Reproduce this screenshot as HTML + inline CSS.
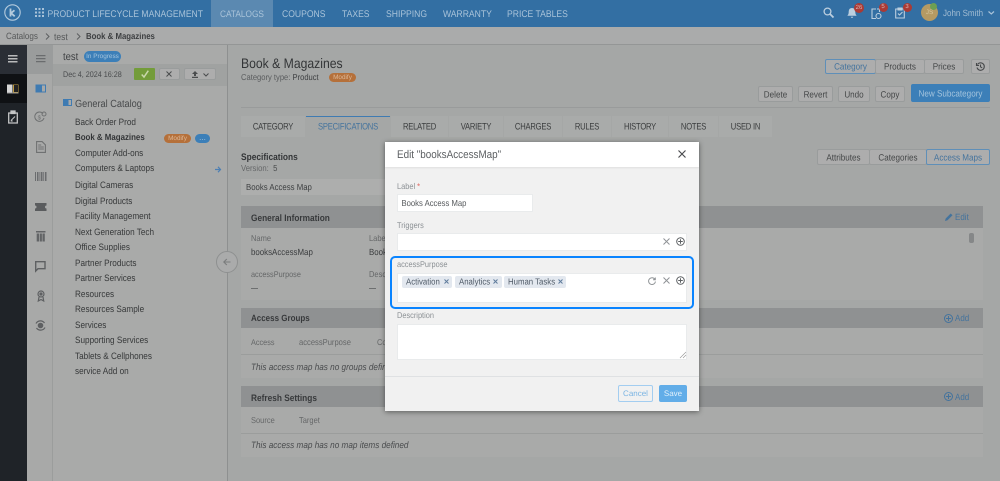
<!DOCTYPE html>
<html><head><meta charset="utf-8"><title>Catalogs</title>
<style>
html,body{margin:0;padding:0;width:1000px;height:481px;overflow:hidden;background:#a5a7a6}
body{position:relative;font-family:"Liberation Sans",sans-serif;font-size:8.2px;color:#3d3f41;text-rendering:geometricPrecision;filter:blur(.3px)}
.a{position:absolute}
.t{position:absolute;white-space:nowrap;line-height:12px;transform:translateY(-5.5px) scaleY(1.13)}
.b{position:absolute;box-sizing:border-box;text-align:center;white-space:nowrap;background:#adadad;border:1px solid #999c9c;border-radius:2px;color:#444647;font-size:8.1px}
.b span,.tag span{display:inline-block;transform:scaleY(1.13)}
.tab span{display:inline-block;transform:scaleY(1.25)}
.nav{color:#a9c3d9;font-size:8.6px;top:12.5px}
.tab{position:absolute;top:116px;height:21px;line-height:22px;text-align:center;background:#a9abaa;color:#3a3c3d;font-size:7.6px;letter-spacing:-.2px}
.it{left:75px;font-size:8.2px;color:#37393a}
.ph{position:absolute;left:241px;width:742px;background:#8f9192}
.pb{position:absolute;left:241px;width:742px;background:#a9aaa9}
.ptt{left:251px;font-weight:bold;font-size:8.3px;color:#37393b}
.mut{color:#656768;font-size:7.5px}
.lab{color:#8c9195;font-size:7.4px}
.inp{position:absolute;background:#fff;border:1px solid #e9ebec;box-sizing:border-box}
.tag{position:absolute;top:276px;height:12px;line-height:12px;background:#e3e8ef;border-radius:2px;color:#505b68;font-size:7.8px;padding-left:4px;box-sizing:border-box;white-space:nowrap}
.bd{position:absolute;width:9px;height:9px;border-radius:50%;background:#aa3a35;color:#d9b5b3;font-size:6px;line-height:9px;text-align:center}
svg{position:absolute;overflow:visible}
</style></head><body>

<!-- top bar -->
<div class="a" style="left:0;top:0;width:1000px;height:27px;background:#336fa3"></div>
<div class="a" style="left:211px;top:0;width:62px;height:27px;background:#5b89b1"></div>
<svg style="left:4px;top:4px" width="17" height="17" fill="none" stroke="#b5cbdd"><circle cx="8.5" cy="8.5" r="7.7" stroke-width="1.1"/><path d="M6.5 4.5v8M10.500 6.300L7 9l3.700 3.300" stroke-width="1.8"/></svg>
<svg style="left:35px;top:8px" width="9" height="9" fill="#a9c3d9"><path d="M0 0h2v2H0zM3.500 0h2v2h-2zM7 0h2v2H7zM0 3.500h2v2H0zM3.500 3.500h2v2h-2zM7 3.500h2v2H7zM0 7h2v2H0zM3.500 7h2v2h-2zM7 7h2v2H7z"/></svg>
<div class="t nav" style="left:47.5px">PRODUCT LIFECYCLE MANAGEMENT</div>
<div class="t nav" style="left:220px;font-size:8.3px">CATALOGS</div>
<div class="t nav" style="left:282px">COUPONS</div>
<div class="t nav" style="left:342px">TAXES</div>
<div class="t nav" style="left:386px">SHIPPING</div>
<div class="t nav" style="left:443px">WARRANTY</div>
<div class="t nav" style="left:507px">PRICE TABLES</div>
<svg style="left:823px;top:7px" width="11" height="11" fill="none" stroke="#bccfdf" stroke-width="1.3"><circle cx="4.500" cy="4.500" r="3.400"/><path d="M7 7l3.500 3.500" stroke-width="1.8"/></svg>
<svg style="left:847px;top:8px" width="10" height="11" fill="#bccfdf"><path d="M5 0c2.400 0 3.300 1.800 3.300 4 0 2 .7 3 1.400 3.800H.3C1 7 1.700 6 1.700 4 1.700 1.800 2.600 0 5 0zM3.800 8.700h2.400c0 1.500-2.400 1.500-2.400 0z"/></svg>
<div class="bd" style="left:854px;top:3px;width:10px;height:10px;line-height:10px">26</div>
<svg style="left:871px;top:8px" width="11" height="12" fill="none" stroke="#bccfdf" stroke-width="1.1"><path d="M5 1H1v9.500h4M6 1h2.500v3"/><circle cx="7.500" cy="8" r="2.500"/></svg>
<div class="bd" style="left:878.5px;top:3px">5</div>
<svg style="left:895px;top:8px" width="10" height="11" fill="none" stroke="#bccfdf" stroke-width="1.1"><path d="M3 1H.7v9h8.600V1H7M3 5.500l1.500 1.500 3-3"/><path d="M3 0h4v2H3z" fill="#bccfdf"/></svg>
<div class="bd" style="left:902.5px;top:3px">3</div>
<div class="a" style="left:921px;top:4px;width:17px;height:17px;border-radius:50%;background:#b59a63;color:#d6c69d;font-size:6.5px;line-height:17px;text-align:center">JS</div>
<div class="a" style="left:930px;top:3px;width:7px;height:7px;border-radius:50%;background:#6d9f53"></div>
<div class="t" style="left:943px;top:12.5px;color:#a2bcd2;font-size:8px">John Smith</div>
<svg style="left:988px;top:11px" width="7" height="5" fill="none" stroke="#a9c3d9" stroke-width="1.2"><path d="M.5.500L3.300 3 6 .5"/></svg>

<!-- breadcrumb -->
<div class="a" style="left:0;top:27px;width:1000px;height:18px;background:#aaabab;border-bottom:1px solid #949696;box-sizing:border-box"></div>
<div class="t" style="left:6px;top:36px;color:#565859;font-size:8.1px">Catalogs</div>
<svg style="left:45px;top:33px" width="5" height="7" fill="none" stroke="#5d5f61"><path d="M1 .5L4 3.500 1 6.500"/></svg>
<div class="t" style="left:54px;top:36px;color:#565859;font-size:8.5px">test</div>
<svg style="left:76px;top:33px" width="5" height="7" fill="none" stroke="#5d5f61"><path d="M1 .5L4 3.500 1 6.500"/></svg>
<div class="t" style="left:86px;top:36px;font-weight:bold;color:#3d3f41;font-size:7.8px">Book &amp; Magazines</div>

<!-- dark sidebar -->
<div class="a" style="left:0;top:45px;width:27px;height:436px;background:#1f2328"></div>
<div class="a" style="left:0;top:45px;width:27px;height:29px;background:#2a2e35"></div>
<div class="a" style="left:0;top:74px;width:27px;height:29px;background:#0f1114"></div>
<svg style="left:8px;top:55px" width="10" height="8" fill="#b9babb"><path d="M0 0h9.500v1.500H0zM0 3h9.500v1.500H0zM0 6h9.500v1.500H0z"/></svg>
<svg style="left:7px;top:84px" width="12" height="10"><path d="M0 .5h5.500v8H0z" fill="#d6d6d6"/><path d="M6 .5h5.500v8H6z" fill="#c09a3f"/><path d="M7 1h4v7H7z" fill="#222"/><path d="M0 8.500h11.500V9.500H0z" fill="#999"/></svg>
<svg style="left:8px;top:111px" width="10" height="13" fill="none" stroke="#c4c5c6" stroke-width="1.3"><path d="M.7 2h8.600v10H.7z"/><path d="M3 0h4v2.500H3z" fill="#c4c5c6"/><path d="M3 9.500L7 5.500M2.700 10h2" stroke-width="1"/></svg>

<!-- secondary sidebar -->
<div class="a" style="left:27px;top:45px;width:26px;height:436px;background:#a8a9a8;border-right:1px solid #9b9d9c;box-sizing:border-box"></div>
<div class="a" style="left:27px;top:45px;width:26px;height:29px;background:#9a9c9c"></div>
<svg style="left:36px;top:55px" width="10" height="8" fill="#6a6c6e"><path d="M0 0h9.500v1.300H0zM0 3h9.500v1.300H0zM0 6h9.500v1.300H0z"/></svg>
<svg style="left:35px;top:84px" width="12" height="10"><path d="M.5.500h5.500v8H.5z" fill="#3f7bb2"/><path d="M6.500 1h4v7h-4z" fill="none" stroke="#3f7bb2"/></svg>
<svg style="left:35px;top:111px" width="12" height="12" fill="none" stroke="#6f7172"><path d="M8 2.500A4.700 4.700 0 1 0 9 7"/><circle cx="9" cy="3" r="2"/><text x="2.600" y="8.500" font-size="6" fill="#6f7172" stroke="none" font-family="Liberation Sans">$</text></svg>
<svg style="left:36px;top:141px" width="10" height="12" fill="none" stroke="#6f7172" stroke-width="1.1"><path d="M.6.600h5.500l3.300 3.300v7.500H.6z"/><path d="M2.200 6h5.600M2.200 8h5.600M2.200 4h3"/></svg>
<svg style="left:35px;top:172px" width="12" height="10" fill="#6a6c6e"><path d="M0 0h1v9H0zM2 0h1.500v9H2zM4.500 0h.8v9h-.8zM6 0h1.500v9H6zM8.300 0h.8v9h-.8zM10 0h1.500v9H10z"/></svg>
<svg style="left:35px;top:203px" width="12" height="8"><path d="M0 0h11.500v2.500a1.500 1.500 0 0 0 0 3V8H0V5.500a1.500 1.500 0 0 0 0-3z" fill="#5a5c5e"/></svg>
<svg style="left:36px;top:231px" width="10" height="11" fill="#626466"><path d="M0 0h9.500v1.500H0zM.7 2.500h2.300V10.500H.7zM3.700 2.500h2.200V10.500H3.700zM6.500 2.500h2.300V10.500H6.500z"/></svg>
<svg style="left:35px;top:261px" width="11" height="11" fill="none" stroke="#5e6062" stroke-width="1.4"><path d="M.7.700h9.300v7H3L.7 10z"/></svg>
<svg style="left:37px;top:290px" width="8" height="12" fill="none" stroke="#5e6062" stroke-width="1.2"><circle cx="4" cy="4" r="3"/><circle cx="4" cy="4" r="1" fill="#5e6062"/><path d="M2 7l-.7 4 2.700-1.500L6.700 11 6 7"/></svg>
<svg style="left:35px;top:320px" width="11" height="11" fill="none" stroke="#5e6062" stroke-width="1.2"><path d="M1 3.500A5 5 0 0 1 9.500 3M10 7.500A5 5 0 0 1 1.500 8"/><circle cx="5.500" cy="5.500" r="2.200" fill="#5e6062"/></svg>

<!-- tree panel -->
<div class="a" style="left:53px;top:45px;width:174px;height:436px;background:#a9aaa9"></div>
<div class="a" style="left:53px;top:64px;width:174px;height:22px;background:#a0a2a1"></div>
<div class="a" style="left:227px;top:45px;width:1px;height:436px;background:#8e9090"></div>
<div class="t" style="left:63px;top:57px;font-size:9.5px;color:#404244">test</div>
<div class="a" style="left:84px;top:51px;width:37px;height:11px;line-height:11px;border-radius:6px;background:#3c7fb8;color:#a4c4dd;font-size:6.4px;text-align:center">In Progress</div>
<div class="t" style="left:63px;top:74px;font-size:7.2px;color:#4a4c4e">Dec 4, 2024 16:28</div>
<div class="a" style="left:134px;top:68px;width:21px;height:12px;background:#739c3a;border-radius:1px"></div>
<svg style="left:141px;top:70px" width="8" height="8" fill="none" stroke="#c9d7ab" stroke-width="1.5"><path d="M.7 4.500L3 7 7.300.7"/></svg>
<div class="b" style="left:159px;top:68px;width:21px;height:12px"></div>
<svg style="left:166px;top:71px" width="6" height="6" fill="none" stroke="#4a4c4d"><path d="M.5.500l5 5M5.500.5l-5 5"/></svg>
<div class="b" style="left:184px;top:68px;width:32px;height:12px"></div>
<svg style="left:192px;top:71px" width="6" height="7" fill="#4a4c4d"><path d="M3 0l3 3H4v2H2V3H0zM0 5.800h6V7H0z"/></svg>
<svg style="left:203px;top:73px" width="6" height="4" fill="none" stroke="#4a4c4d"><path d="M.5.500L3 3 5.500.5"/></svg>
<svg style="left:63px;top:99px" width="9" height="7"><path d="M0 0h4.500v7H0z" fill="#3f7bb2"/><path d="M5 .5h3.500v6H5z" fill="none" stroke="#3f7bb2"/></svg>
<div class="t" style="left:75px;top:103px;font-size:9.2px;color:#484a4c">General Catalog</div>
<div class="t it" style="top:122px">Back Order Prod</div>
<div class="t it" style="top:137px;font-weight:bold;font-size:7.9px;color:#333537">Book &amp; Magazines</div>
<div class="a" style="left:164px;top:134px;width:27px;height:9px;line-height:9px;border-radius:5px;background:#b5703a;color:#dcb898;font-size:6.4px;text-align:center">Modify</div>
<div class="a" style="left:195px;top:134px;width:15px;height:9px;line-height:7px;border-radius:5px;background:#3c7fb8;color:#a4c4dd;font-size:8px;text-align:center">...</div>
<div class="t it" style="top:153px">Computer Add-ons</div>
<div class="t it" style="top:168px">Computers &amp; Laptops</div>
<svg style="left:215px;top:166px" width="6" height="7" fill="none" stroke="#4d7fb3" stroke-width="1.2"><path d="M0 3.500h5M3 .8l2.500 2.700L3 6.200"/></svg>
<div class="t it" style="top:185px">Digital Cameras</div>
<div class="t it" style="top:201px">Digital Products</div>
<div class="t it" style="top:216px">Facility Management</div>
<div class="t it" style="top:232px">Next Generation Tech</div>
<div class="t it" style="top:247px">Office Supplies</div>
<div class="t it" style="top:263px">Partner Products</div>
<div class="t it" style="top:278px">Partner Services</div>
<div class="t it" style="top:294px">Resources</div>
<div class="t it" style="top:309px">Resources Sample</div>
<div class="t it" style="top:325px">Services</div>
<div class="t it" style="top:340px">Supporting Services</div>
<div class="t it" style="top:356px">Tablets &amp; Cellphones</div>
<div class="t it" style="top:371px">service Add on</div>
<div class="a" style="left:216px;top:251px;width:22px;height:22px;box-sizing:border-box;border-radius:50%;background:#aaabab;border:1px solid #8e9090"></div>
<svg style="left:223px;top:258px" width="8" height="8" fill="none" stroke="#7a7c7d" stroke-width="1.1"><path d="M7.500 4H.8M3.800 1L.8 4l3 3"/></svg>

<!-- main header -->
<div class="t" style="left:241px;top:63px;font-size:12.2px;color:#333537">Book &amp; Magazines</div>
<div class="t" style="left:241px;top:77px;font-size:7.6px;color:#5a5c5e">Category type: <span style="color:#3d3f41">Product</span></div>
<div class="a" style="left:329px;top:73px;width:27px;height:9px;line-height:9px;border-radius:5px;background:#b5703a;color:#dcb898;font-size:6.4px;text-align:center">Modify</div>
<div class="a" style="left:241px;top:107px;width:749px;height:1px;background:#999b9b"></div>

<div class="b" style="left:825px;top:59px;width:51px;height:15px;line-height:14px;border-color:#5f8fb8;color:#44739d"><span>Category</span></div>
<div class="b" style="left:875px;top:59px;width:50px;height:15px;line-height:14px"><span>Products</span></div>
<div class="b" style="left:924px;top:59px;width:40px;height:15px;line-height:14px"><span>Prices</span></div>
<div class="b" style="left:971px;top:59px;width:19px;height:15px"></div>
<svg style="left:976px;top:62px" width="9" height="9" fill="none" stroke="#46484a" stroke-width="1.1"><path d="M1.500 2.500A3.700 3.700 0 1 1 1 5.500M.5 1v2.500h2.500M4.500 2.500v2.300l1.700 1"/></svg>
<div class="b" style="left:758px;top:86px;width:35px;height:16px;line-height:15px"><span>Delete</span></div>
<div class="b" style="left:798px;top:86px;width:35px;height:16px;line-height:15px"><span>Revert</span></div>
<div class="b" style="left:838px;top:86px;width:32px;height:16px;line-height:15px"><span>Undo</span></div>
<div class="b" style="left:875px;top:86px;width:30px;height:16px;line-height:15px"><span>Copy</span></div>
<div class="b" style="left:911px;top:84px;width:79px;height:18px;line-height:17px;background:#3c7fb8;border-color:#3c7fb8;color:#a4c4dd"><span>New Subcategory</span></div>

<!-- tabs -->
<div class="tab" style="left:241px;width:64px"><span>CATEGORY</span></div>
<div class="tab" style="left:306px;width:84px;border-top:1px solid #3f7bb2;box-sizing:border-box;color:#44739d;background:#a5a7a6;line-height:20px"><span>SPECIFICATIONS</span></div>
<div class="tab" style="left:391px;width:57px"><span>RELATED</span></div>
<div class="tab" style="left:449px;width:54px"><span>VARIETY</span></div>
<div class="tab" style="left:504px;width:58px"><span>CHARGES</span></div>
<div class="tab" style="left:563px;width:48px"><span>RULES</span></div>
<div class="tab" style="left:612px;width:56px"><span>HISTORY</span></div>
<div class="tab" style="left:669px;width:49px"><span>NOTES</span></div>
<div class="tab" style="left:719px;width:53px"><span>USED IN</span></div>

<!-- specifications -->
<div class="t" style="left:241px;top:156px;font-weight:bold;font-size:8.4px;color:#333537">Specifications</div>
<div class="t mut" style="left:241px;top:168px;font-size:7.7px">Version: &nbsp;<span style="color:#4a4c4d">5</span></div>
<div class="a" style="left:241px;top:179px;width:150px;height:16px;background:#adaead"></div>
<div class="t" style="left:246px;top:187px;font-size:7.8px;color:#3e4042">Books Access Map</div>
<div class="b" style="left:817px;top:149px;width:53px;height:16px;line-height:15px"><span>Attributes</span></div>
<div class="b" style="left:869px;top:149px;width:58px;height:16px;line-height:15px"><span>Categories</span></div>
<div class="b" style="left:926px;top:149px;width:64px;height:16px;line-height:15px;border-color:#5f8fb8;color:#44739d"><span>Access Maps</span></div>

<div class="ph" style="top:206px;height:22px"></div>
<div class="pb" style="top:228px;height:72px"></div>
<div class="t ptt" style="top:217px">General Information</div>
<svg style="left:945px;top:213px" width="8" height="8" fill="#44739d"><path d="M0 8l.7-2.500L5.700.5l1.800 1.800-5 5z"/></svg>
<div class="t" style="left:955px;top:217px;color:#44739d;font-size:8px">Edit</div>
<div class="a" style="left:969px;top:233px;width:5px;height:10px;border-radius:2px;background:#858788"></div>
<div class="t mut" style="left:251px;top:238px">Name</div>
<div class="t" style="left:251px;top:252px;font-size:7.9px;color:#3a3c3e">booksAccessMap</div>
<div class="t mut" style="left:369px;top:238px">Label</div>
<div class="t" style="left:369px;top:252px;font-size:7.9px;color:#3a3c3e">Books</div>
<div class="t mut" style="left:251px;top:274px;font-size:7.3px">accessPurpose</div>
<div class="t mut" style="left:369px;top:274px">Description</div>
<div class="a" style="left:251px;top:288px;width:7px;height:1px;background:#6d6f70"></div>
<div class="a" style="left:369px;top:288px;width:7px;height:1px;background:#6d6f70"></div>

<div class="ph" style="top:308px;height:20px"></div>
<div class="pb" style="top:328px;height:50px"></div>
<div class="a" style="left:241px;top:354px;width:742px;height:1px;background:#9b9d9c"></div>
<div class="t ptt" style="top:318px;font-size:8px">Access Groups</div>
<svg style="left:944px;top:314px" width="9" height="9" fill="none" stroke="#44739d"><circle cx="4.500" cy="4.500" r="4"/><path d="M2 4.500h5M4.500 2v5"/></svg>
<div class="t" style="left:955px;top:318px;color:#44739d;font-size:8px">Add</div>
<div class="t mut" style="left:251px;top:342px;font-size:7.3px">Access</div>
<div class="t mut" style="left:299px;top:342px;font-size:7.6px">accessPurpose</div>
<div class="t mut" style="left:377px;top:342px">Co</div>
<div class="t" style="left:251px;top:367px;font-style:italic;color:#4a4c4e;font-size:8.2px">This access map has no groups defined</div>

<div class="ph" style="top:386px;height:21px"></div>
<div class="pb" style="top:407px;height:50px"></div>
<div class="a" style="left:241px;top:433px;width:742px;height:1px;background:#9b9d9c"></div>
<div class="t ptt" style="top:397px">Refresh Settings</div>
<svg style="left:944px;top:392px" width="9" height="9" fill="none" stroke="#44739d"><circle cx="4.500" cy="4.500" r="4"/><path d="M2 4.500h5M4.500 2v5"/></svg>
<div class="t" style="left:955px;top:397px;color:#44739d;font-size:8px">Add</div>
<div class="t mut" style="left:251px;top:420px">Source</div>
<div class="t mut" style="left:299px;top:420px">Target</div>
<div class="t" style="left:251px;top:445px;font-style:italic;color:#4a4c4e;font-size:8.2px">This access map has no map items defined</div>

<!-- modal -->
<div class="a" style="left:385px;top:142px;width:314px;height:269px;background:#f1f1f1;box-shadow:0 1px 5px rgba(0,0,0,.45)"></div>
<div class="a" style="left:385px;top:142px;width:314px;height:25px;background:#fff;box-shadow:0 1px 2px rgba(0,0,0,.08)"></div>
<div class="t" style="left:397px;top:155px;font-size:9.9px;color:#5d6063">Edit "booksAccessMap"</div>
<svg style="left:678px;top:150px" width="8" height="8" fill="none" stroke="#4b4d50" stroke-width="1.2"><path d="M.5.500l7 7M7.500.5l-7 7"/></svg>

<div class="t lab" style="left:397px;top:186px">Label <span style="color:#e0645c">*</span></div>
<div class="inp" style="left:397px;top:194px;width:136px;height:18px"></div>
<div class="t" style="left:401.5px;top:203px;font-size:7.7px;color:#56595c">Books Access Map</div>

<div class="t lab" style="left:397px;top:225px">Triggers</div>
<div class="inp" style="left:397px;top:233px;width:290px;height:18px"></div>
<svg style="left:663px;top:238px" width="7" height="7" fill="none" stroke="#8f9396"><path d="M.5.500l6 6M6.500.5l-6 6"/></svg>
<svg style="left:676px;top:237px" width="9" height="9" fill="none" stroke="#5d6063"><circle cx="4.500" cy="4.500" r="3.800"/><path d="M2.200 4.500h4.600M4.500 2.200v4.600"/></svg>

<div class="a" style="left:389.5px;top:256px;width:304px;height:53px;box-sizing:border-box;border:2.5px solid #0a84ff;border-radius:5px"></div>
<div class="t lab" style="left:397px;top:264px">accessPurpose</div>
<div class="inp" style="left:397px;top:273px;width:290px;height:30px"></div>
<div class="tag" style="left:402px;width:50px"><span>Activation</span><svg style="left:42px;top:2.500px" width="5" height="5" fill="none" stroke="#5f7b9c"><path d="M.5.500l4 4M4.500.5l-4 4"/></svg></div>
<div class="tag" style="left:455px;width:47px"><span>Analytics</span><svg style="left:38px;top:2.500px" width="5" height="5" fill="none" stroke="#5f7b9c"><path d="M.5.500l4 4M4.500.5l-4 4"/></svg></div>
<div class="tag" style="left:504px;width:62px"><span>Human Tasks</span><svg style="left:54px;top:2.500px" width="5" height="5" fill="none" stroke="#5f7b9c"><path d="M.5.500l4 4M4.500.5l-4 4"/></svg></div>
<svg style="left:648px;top:277px" width="8" height="8" fill="none" stroke="#8f9396"><path d="M7 2.500A3.400 3.400 0 1 0 7.400 4.500M7.300.5v2.300H5"/></svg>
<svg style="left:663px;top:277px" width="7" height="7" fill="none" stroke="#8f9396"><path d="M.5.500l6 6M6.500.5l-6 6"/></svg>
<svg style="left:676px;top:276px" width="9" height="9" fill="none" stroke="#5d6063"><circle cx="4.500" cy="4.500" r="3.800"/><path d="M2.200 4.500h4.600M4.500 2.200v4.600"/></svg>

<div class="t lab" style="left:397px;top:315px">Description</div>
<div class="inp" style="left:397px;top:324px;width:290px;height:36px"></div>
<svg style="left:680px;top:352px" width="6" height="6" fill="none" stroke="#9a9a9a" stroke-width=".7"><path d="M0 6l6-6M3 6l3-3"/></svg>
<div class="a" style="left:385px;top:376px;width:314px;height:1px;background:#dfe1e3"></div>
<div class="a" style="left:618px;top:385px;width:35px;height:17px;line-height:16px;box-sizing:border-box;border:1px solid #a3cdf0;border-radius:2px;color:#7ab4e3;font-size:8px;text-align:center">Cancel</div>
<div class="a" style="left:659px;top:385px;width:28px;height:17px;line-height:17px;border-radius:2px;background:#62ade8;color:#e1f0fb;font-size:8px;text-align:center">Save</div>
</body></html>
